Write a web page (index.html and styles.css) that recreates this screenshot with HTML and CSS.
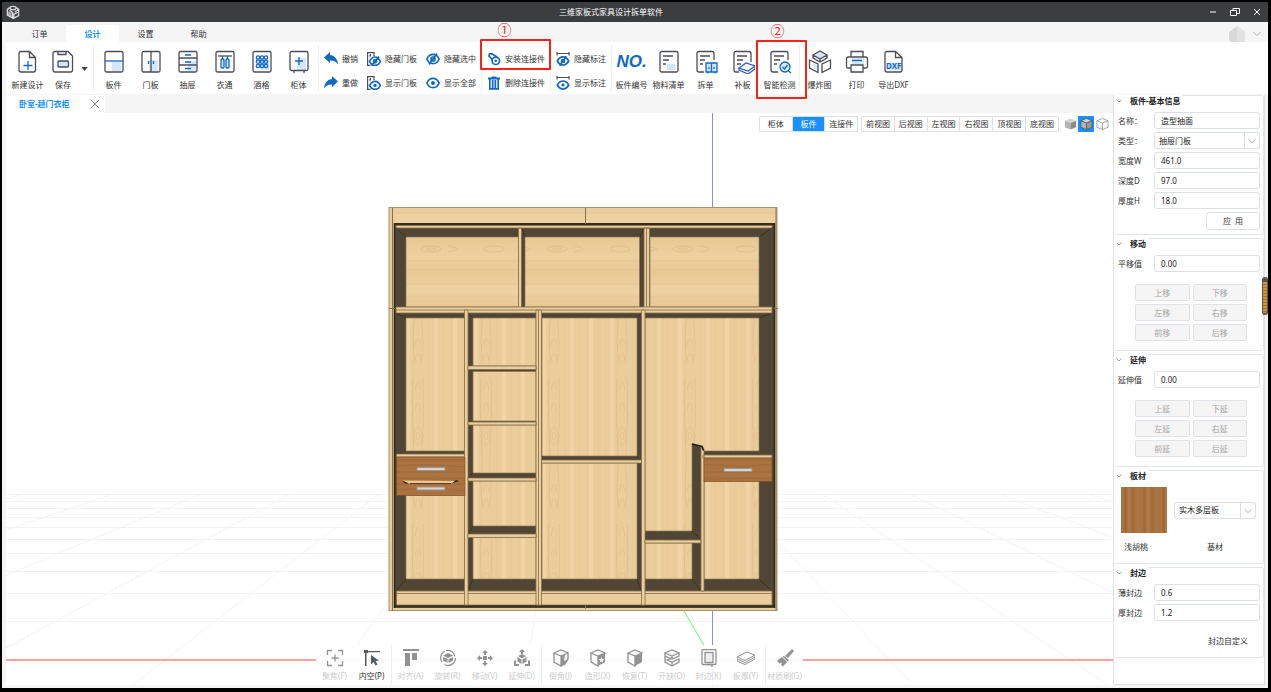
FILE: index.html
```html
<!DOCTYPE html>
<html lang="zh-CN">
<head>
<meta charset="utf-8">
<title>三维家板式家具设计拆单软件</title>
<link rel="stylesheet" href="styles.css">
</head>
<body>
<div class="app">
  <header class="titlebar">
    <svg class="logo" viewBox="0 0 16 16" width="14" height="16" fill="none" stroke="#d9d9d9" stroke-width="1.5"><ellipse cx="8" cy="3.4" rx="3.6" ry="1.9"/><path d="M4 3 1.6 5v6.500l6 3.500V8.500L4 6M12 3l2.500 2v3L9 10.500V15l5.500-3V9.500M3.500 7.500v4.500M5.600 8.500v4.500M10 8l4-2.500"/></svg>
    <h1 class="app-title">三维家板式家具设计拆单软件</h1>
    <div class="window-controls">
      <button aria-label="最小化"><svg viewBox="0 0 10 10" width="10" height="10"><path d="M2 5h6"/></svg></button>
      <button aria-label="还原"><svg viewBox="0 0 10 10" width="10" height="10"><path d="M.5 3.500h6v5h-6zM3 3.500v-2h6.500v5h-3"/></svg></button>
      <button aria-label="关闭"><svg viewBox="0 0 10 10" width="10" height="10"><path d="M2 2l6 6M8 2l-6 6"/></svg></button>
    </div>
  </header>

  <nav class="menu">
    <button class="menu-tab">订单</button>
    <button class="menu-tab active">设计</button>
    <button class="menu-tab">设置</button>
    <button class="menu-tab">帮助</button>
    <button class="account" aria-label="账户">
      <svg viewBox="0 0 16 16" width="16" height="16"><path d="M0 6 8 0l8 6v8l-2 2H2l-2-2z" fill="#d8d8d8"/><path d="M8 0l8 6v8l-2 2H8z" fill="#e2e2e2"/></svg>
      <svg viewBox="0 0 8 6" width="8" height="6" fill="none" stroke="#b5b5b5"><path d="M.5 1 4 4.500 7.500 1"/></svg>
    </button>
  </nav>

  <div class="ribbon">
    <div class="tool-group file-group">
      <button class="tool"><svg viewBox="0 0 24 24"><path class="o" d="M5 1.500h8.500l6 6V20q0 2-2 2H5q-2 0-2-2V3.500q0-2 2-2zM13.500 1.500v6h6"/><path class="b" d="M12 11v9M7.500 15.500h9"/></svg><span>新建设计</span></button>
      <button class="tool save"><svg viewBox="0 0 24 24"><path class="o" d="M4 1.500h13l4.500 4.500V20q0 2-2 2H4q-2 0-2-2V3.500q0-2 2-2z"/><path class="o" d="M7 1.500v3h8v-3"/><rect class="o f" x="7" y="11" width="10.500" height="6" rx="1"/></svg><span>保存</span></button>
      <button class="drop" aria-label="保存选项"><svg viewBox="0 0 8 5" width="7" height="4"><path d="M0 0h8L4 5z" fill="#444"/></svg></button>
    </div>
    <div class="tool-group">
      <button class="tool"><svg viewBox="0 0 24 24"><path class="f" d="M10 12h9v9h-9z"/><rect class="o" x="3" y="1.500" width="18" height="20.500" rx="1.500"/><path class="b" d="M3 11h18"/></svg><span>板件</span></button>
      <button class="tool"><svg viewBox="0 0 24 24"><path class="f" d="M10 10h9v11h-9z"/><rect class="o" x="3" y="1.500" width="18" height="20.500" rx="1.500"/><path class="o" d="M12 1.500V22"/><path class="b" d="M9.500 11v3M14.500 11v3"/></svg><span>门板</span></button>
      <button class="tool"><svg viewBox="0 0 24 24"><path class="f" d="M12 11h8v10h-8z"/><rect class="o" x="3" y="1.500" width="18" height="20.500" rx="1.500"/><path class="o" d="M3 8h18M3 15h18"/><path class="b" d="M9 5h6M9 12h6M9 18.500h6"/></svg><span>抽屉</span></button>
      <button class="tool"><svg viewBox="0 0 24 24"><rect class="o" x="3" y="1.500" width="18" height="20.500" rx="1.500"/><path class="o" d="M5 6h14"/><path class="b" d="M9.500 6v3M14.500 6v3"/><rect class="b f" x="8" y="9" width="3" height="9" rx="1"/><rect class="b f" x="13" y="9" width="3" height="9" rx="1"/></svg><span>衣通</span></button>
      <button class="tool"><svg viewBox="0 0 24 24"><path class="f" d="M10 10h9v10h-9z"/><rect class="o" x="3" y="1.500" width="18" height="20.500" rx="1.500"/><g class="b"><circle cx="8" cy="7.500" r="1.700"/><circle cx="12" cy="7.500" r="1.700"/><circle cx="16" cy="7.500" r="1.700"/><circle cx="8" cy="11.700" r="1.700"/><circle cx="12" cy="11.700" r="1.700"/><circle cx="16" cy="11.700" r="1.700"/><circle cx="8" cy="16" r="1.700"/><circle cx="12" cy="16" r="1.700"/><circle cx="16" cy="16" r="1.700"/></g></svg><span>酒格</span></button>
      <button class="tool"><svg viewBox="0 0 24 24"><path class="f" d="M10 8h9v12h-9z"/><rect class="o" x="3" y="1.500" width="18" height="19" rx="1.500"/><path class="o" d="M7 21v2M17 21v2"/><path class="b" d="M12 7v8M8 11h8"/></svg><span>柜体</span></button>
    </div>
    <div class="small-group">
      <button class="mini"><svg viewBox="0 0 14 14"><path class="s" d="M0 5.500 6 0v3q7 .5 8 9.500Q11 8 6 8.500V11z"/></svg>撤销</button>
      <button class="mini"><svg viewBox="0 0 14 14"><path class="s" d="M14 5.500 8 0v3q-7 .5-8 9.500Q3 8 8 8.500V11z"/></svg>重做</button>
      <button class="mini"><svg viewBox="0 0 14 14"><path class="k" d="M3.500 13.400H.600V.600H7V4M3.500 2v2M2 4h2"/><path class="e" d="M2.500 9.500Q4.500 5 8 5t5.300 4.500Q11.500 13.300 8 13.300T2.500 9.500zM4.500 13.500l7.500-9"/><circle class="e" cx="8" cy="9.300" r="1.500"/></svg>隐藏门板</button>
      <button class="mini"><svg viewBox="0 0 14 14"><path class="k" d="M3.500 13.400H.600V.600H7V4M3.500 2v2M2 4h2"/><path class="e" d="M2.500 9.500Q4.500 5.300 8 5.300t5.300 4.200Q11.500 13.300 8 13.300T2.500 9.500z"/><circle class="s" cx="8" cy="9.400" r="1.700"/></svg>显示门板</button>
      <button class="mini"><svg viewBox="0 0 14 14"><path class="e" d="M.8 7Q3 2.300 7 2.300T13.200 7Q11 11.700 7 11.700T.8 7zM3 12.500l8-11"/><circle class="e" cx="7" cy="7" r="2"/></svg>隐藏选中</button>
      <button class="mini"><svg viewBox="0 0 14 14"><path class="e" d="M.8 7Q3 2.300 7 2.300T13.200 7Q11 11.700 7 11.700T.8 7z"/><circle class="s" cx="7" cy="7" r="2"/></svg>显示全部</button>
    </div>
    <div class="small-group">
      <button class="mini"><svg viewBox="0 0 14 14"><path class="e" d="M5.500 8 2 4 2.500 1.800l2.500 0L10 5"/><circle class="e" cx="8.800" cy="8.800" r="3.700"/><circle class="s" cx="8.800" cy="8.800" r="1.300"/></svg>安装连接件</button>
      <button class="mini"><svg viewBox="0 0 14 14"><path class="s" d="M1 1.500h3.500V.5h5v1H13v2H1z"/><path class="e" d="M2.800 3v9.800h8.400V3M5.700 4v8M8.300 4v8"/></svg>删除连接件</button>
      <div class="callout callout-one"><span>①</span></div>
    </div>
    <div class="small-group">
      <button class="mini"><svg viewBox="0 0 14 14"><path class="k" d="M1 0v3.500M13 0v3.500M1 1.500h12"/><path class="e" d="M1.300 9Q3.500 4.800 7 4.800T12.700 9Q10.500 13 7 13T1.300 9zM3.500 13.500l7-9"/><circle class="e" cx="7" cy="9" r="1.500"/></svg>隐藏标注</button>
      <button class="mini"><svg viewBox="0 0 14 14"><path class="k" d="M1 0v3.500M13 0v3.500M1 1.500h12"/><path class="e" d="M1.300 9Q3.500 5 7 5T12.700 9Q10.500 13 7 13T1.300 9z"/><circle class="s" cx="7" cy="9" r="1.600"/></svg>显示标注</button>
    </div>
    <div class="tool-group">
      <button class="tool"><b class="number-icon">NO.</b><span>板件编号</span></button>
      <button class="tool"><svg viewBox="0 0 24 24"><path class="f" d="M10 14h8v6h-8z"/><rect class="o" x="3" y="1.500" width="18" height="20.500" rx="1.500"/><path class="o" d="M6 6h10M6 10h6M6 14h3"/></svg><span>物料清单</span></button>
      <button class="tool"><svg viewBox="0 0 24 24"><path class="o" d="M10 22H5q-2 0-2-2V3.500q0-2 2-2h13q2 0 2 2V10M6 6h10M6 10h5M6 14h3"/><path class="b f" d="M12 13h11v9H12z"/><path class="b" d="M17.500 13v9M15 17v2M20 17v2M14 22v1.500M21 22v1.500"/></svg><span>拆单</span></button>
      <button class="tool"><svg viewBox="0 0 24 24"><path class="o" d="M8 22H5q-2 0-2-2V3.500q0-2 2-2h13q2 0 2 2V12M6 6h10M6 10h6M6 14h4"/><path d="M8 18l7-5 9 3-7 5zM8 18v2l9 4 7-5v-3" fill="#fff" stroke="#2c56c5" stroke-width="1.200"/></svg><span>补板</span></button>
      <button class="tool"><svg viewBox="0 0 24 24"><path class="o" d="M10 22H5q-2 0-2-2V3.500q0-2 2-2h13q2 0 2 2V10M6 6h10M6 10h6M6 14h3"/><circle class="b f" cx="17" cy="17" r="5"/><path class="b" d="M14.500 17l2 2 3-4M20.500 21l2.500 2"/></svg><span>智能检测</span></button>
      <div class="callout callout-two"><span>②</span></div>
    </div>
    <div class="tool-group last">
      <button class="tool"><svg viewBox="0 0 24 24"><path class="f" d="M6 5l6-3 6 3-6 4zM5 13l5 3v5l-5-3z"/><path class="o" d="M5 5l7-4 7 4-7 4zM1.500 10 10 14v8.500L1.500 18zM22.500 10 14 14v8.500l8.500-4.500zM5 5v3l7 4 7-4V5M12 9v3"/></svg><span>爆炸图</span></button>
      <button class="tool"><svg viewBox="0 0 24 24"><path class="f" d="M7 8h12v6H7z"/><path class="o" d="M6 7V1.500h12V7M6 18H3q-1.500 0-1.500-1.500V9q0-2 2-2h17q2 0 2 2v7.500Q22.500 18 21 18h-3M6 15h12v7H6z"/><path class="b" d="M7 10.500h10"/></svg><span>打印</span></button>
      <button class="tool"><svg viewBox="0 0 24 24"><path class="f" d="M5 13h15v7H5z"/><path class="o" d="M5 1.500h8.500l6.500 6V20q0 2-2 2H5q-2 0-2-2V3.500q0-2 2-2zM13.500 1.500v6H20"/><text x="4" y="19" class="dxf">DXF</text></svg><span>导出DXF</span></button>
    </div>
  </div>

  <main class="workspace">
    <div class="document">
      <div class="doc-tabs">
        <div class="doc-tab"><span>卧室-趟门衣柜</span><button aria-label="关闭标签"><svg viewBox="0 0 8 8" width="8" height="8"><path d="M0 0l8 8M8 0 0 8" stroke="#8c8c8c" fill="none"/></svg></button></div>
      </div>
      <div class="stage">
        <svg class="scene" viewBox="6 113 1107 572" preserveAspectRatio="xMidYMid slice">
          <defs>
            <linearGradient id="fade" x1="0" y1="0" x2="0" y2="1"><stop offset="0" stop-color="#e6c794"/><stop offset=".25" stop-color="#eed09e"/><stop offset=".5" stop-color="#e8c995"/><stop offset=".75" stop-color="#eed2a2"/><stop offset="1" stop-color="#e6c794"/></linearGradient>
            <pattern id="wv" x="405" y="318" width="68" height="146" patternUnits="userSpaceOnUse">
              <path d="M0 0h68v146H0z" fill="#ebcd9c"/>
              <path d="M3 0v146M31 0v146M50 0v146" stroke="#f0d4a5" stroke-width="4"/>
              <path d="M8 0v146M24 0v146M38 0v146M46 0v146M58 0v146M65 0v146" stroke="#e2c18c" stroke-width="1" opacity=".6"/>
              <g fill="none" stroke="#d8b47c" stroke-width=".7" opacity=".6"><path d="M10 0q-4 20 0 45M16 0q4 24 0 45M8 60q-2 40 2 86M18 60q2 40-2 86"/><ellipse cx="13" cy="118" rx="4" ry="9"/><ellipse cx="13" cy="118" rx="2" ry="4"/><path d="M10 28q3-16 6 0M10 42q3-14 6 0M10 72q3-18 6 0M10 92q3-15 6 0"/></g>
            </pattern>
            <pattern id="wh" x="396" y="237" width="126" height="71" patternUnits="userSpaceOnUse">
              <path d="M0 0h126v71H0z" fill="url(#fade)"/>
              <path d="M0 24h126M0 33h126M0 47h126M0 60h126" stroke="#dfbd87" opacity=".5"/>
              <g fill="none" stroke="#d3ae74" stroke-width=".7" opacity=".6"><ellipse cx="35" cy="12" rx="10" ry="3"/><ellipse cx="35" cy="12" rx="5" ry="1"/><ellipse cx="98" cy="12" rx="10" ry="3"/><path d="M0 10q18 2 0 4M52 9q18 3 0 6M126 9q-14 3 0 6"/></g>
            </pattern>
            <pattern id="walnut" x="396" y="457" width="70" height="24" patternUnits="userSpaceOnUse"><path d="M0 0h70v24H0z" fill="#a97240"/><path d="M0 3h70M0 9q30-3 70 1M0 15h70M0 21q40 2 70 0" stroke="#975e30" fill="none" opacity=".5"/><path d="M0 6h70M0 18h70" stroke="#b67c48" opacity=".5"/></pattern>
          </defs>
          <g stroke="#f3f3f3" fill="none">
            <path d="M6 494.500h1107M6 501.500h1107M6 508.500h1107M6 517.500h1107M6 527.500h1107M6 539.500h1107M6 553.500h1107M6 571.500h1107M6 593.500h1107M6 621.500h1107" />
            <path d="M556 494 523 685M467 494 328 685M379 494 133 685M290 494-62 685M201 494-257 685M113 494-452 685M24 494-647 685M644 494 718 685M733 494 913 685M822 494 1108 685M910 494 1303 685M999 494 1499 685M1088 494 1694 685"/>
          </g>
          <path d="M6 660h1107" stroke="#ff8080" stroke-width="1.500"/>
          <path d="M712.500 113v572" stroke="#8a8aff"/>
          <path d="M684 611l43 74" stroke="#6cf56c"/>

          <rect x="389" y="207.500" width="388" height="403" fill="#ebcd9c" stroke="#a39373"/>
          <rect x="395" y="208" width="379" height="15" fill="url(#wh)"/>
          <rect x="395" y="223" width="379" height="385" fill="#514636"/>
          <path d="M395 224h379M395 606h379M394.500 223v385M774.500 223v385" stroke="#2d261b" stroke-width="1.500"/>
          <path d="M392.500 208v403M776 208v403M585.500 208v16M585.500 605v4M389 308.500h6M774 308.500h4" stroke="#88734f" fill="none"/>
          <g fill="url(#wh)" stroke="#8e7852" stroke-width=".7">
            <path d="M406 237h113v70H406zM525 237h114.500v70H525zM650 237h109v70H650z"/>
          </g>
          <g fill="url(#wv)" stroke="#8e7852" stroke-width=".7">
            <path d="M406 318h59v133h-59zM406 495h59v84h-59zM473 318h63v48h-63zM473 371.500h63V421h-63zM473 425h63v48h-63zM473 481h63v45h-63zM473 537h63v42h-63zM542 318h95v138h-95zM542 463h95v116h-95zM645 318h114v133h-55l-3-4-9-3v87h-47zM645 543h47v36h-47zM704 481h55v98h-55z"/>
          </g>
          <path d="M396 228l10 9M522 228l3 9M644 228l-4 9M772 228l-13 9M396 313l10 5M772 313l-13 5M396 591l10-12M468 591l5-12M468 313l5 5M641 313l-4 5M641 591l-4-12M701 591l-9-12M772 591l-13-12M701 540l-9-9M468 478l5-5M468 534l5-8" stroke="#302719" stroke-width=".7"/>
          <g fill="#ebce9e" stroke="#836d48" stroke-width=".8">
            <path d="M396 225.500h376v2.500H396zM518.500 228h3v80h-3zM644 228h5.500v80H644zM646.500 228v80"/>
            <path d="M396 307h376v6H396zM396 310h376"/>
            <path d="M396.500 591H772v14H396.500zM396.500 593.500H772"/>
            <path d="M464.500 310h3.500v295h-3.500zM536 310h5.500v295H536zM538.500 310v295M641.500 310h3.500v295h-3.500z"/>
            <path d="M468 366h68v3.500h-68zM468 422h68v3h-68zM468 478h68v3h-68zM468 534h68v3.500h-68zM541.500 460h100v3h-100zM396.500 454h68v3h-68zM645 540h56v3h-56zM703 455h69v3h-69zM701 447q2-1 3 2v142h-3z"/>
          </g>
          <path d="M692 444l10 2.500 1.500 4" fill="none" stroke="#1e1910" stroke-width="1.500"/>
          <path d="M396.500 457H465v38.500h-68.500zM704 458h68v23.500h-68z" fill="url(#walnut)" stroke="#7b4a23" stroke-width=".6"/>
          <path d="M402 480.500l56 .5-6 3-43-.5z" fill="#e8c997"/><path d="M402 480.500l7 3h-4zM456 480l3 1-8 3z" fill="#2f2415"/><path d="M410 483.500h41" stroke="#683b1b" />
          <g fill="#d4d4d4" stroke="#9f9389"><path d="M417 467.500h28v3h-28zM417 487h28v3h-28zM724 468.500h28v3h-28z"/></g>
        </svg>

        <div class="view-bar">
          <div class="segments three"><button>柜体</button><button class="active">板件</button><button>连接件</button></div>
          <div class="segments six"><button>前视图</button><button>后视图</button><button>左视图</button><button>右视图</button><button>顶视图</button><button>底视图</button></div>
          <div class="render-modes">
            <button aria-label="实体"><svg viewBox="0 0 14 14"><path d="M1 3.500 7 1l6 2.500L7 6z" fill="#d4d4d4"/><path d="M1 3.500 7 6v7l-6-2.500z" fill="#b4b4b4"/><path d="M13 3.500 7 6v7l6-2.500z" fill="#8a8a8a"/></svg></button>
            <button class="active" aria-label="实体线框"><svg viewBox="0 0 14 14" stroke="#555" stroke-width=".8"><path d="M1 3.500 7 1l6 2.500L7 6z" fill="#d4d4d4"/><path d="M1 3.500 7 6v7l-6-2.500z" fill="#b4b4b4"/><path d="M13 3.500 7 6v7l6-2.500z" fill="#999"/></svg></button>
            <button aria-label="线框"><svg viewBox="0 0 14 14" stroke="#888" stroke-width=".8" fill="none"><path d="M1 3.500 7 1l6 2.500L7 6zM1 3.500v7L7 13l6-2.500v-7M7 6v7"/></svg></button>
          </div>
        </div>

        <div class="action-bar">
          <div class="actions">
            <button><svg viewBox="0 0 18 18"><path class="l" d="M1.500 6V1.500H6M12 1.500h4.500V6M16.500 12v4.500H12M6 16.500H1.500V12M9 5.500v7M5.500 9h7"/></svg>聚焦(F)</button>
            <button class="enabled"><svg viewBox="0 0 18 18"><path d="M1 1h4v3H1zM2 4h1.500v13H2zM5 2h12v1.300H5zM8 6l8 5.500-3.500.5 2 3.500-2 1-2-3.500L8 15.500z" fill="#555962"/></svg>内空(P)</button>
          </div>
          <div class="actions">
            <button><svg viewBox="0 0 18 18"><path class="d" d="M1 0h16v2H1zM3 4h5v13H3zM10 4h5v7h-5z"/></svg>对齐(A)</button>
            <button><svg viewBox="0 0 18 18"><path class="l" d="M3 13a7.500 7.500 0 0 1 3-11M7 1.500a7.500 7.500 0 0 1 9 6M16.500 9a7.500 7.500 0 0 1-11 6.500"/><path class="d" d="M9 4l5 2.500-5 2.500-5-2.500zM4 8l4.500 2v4L4 11.500zM14 8l-4.500 2v4l4.500-2.500z"/></svg>旋转(R)</button>
            <button><svg viewBox="0 0 18 18"><path class="d" d="M9 1l3 3H6zM9 17l-3-3h6zM1 9l3-3v6zM17 9l-3 3V6zM7 7h4v4H7zM8 4h2v2H8zM8 12h2v2H8zM4 8h2v2H4zM12 8h2v2h-2z"/></svg>移动(V)</button>
            <button><svg viewBox="0 0 18 18"><path class="d" d="M9 0l3 3H6zM8 3h2v2H8zM9 5l4 2-4 2.500L5 7zM4.500 8 8.500 10.500V15l-4-2.500zM13.500 8l-4 2.500V15l4-2.500zM1 12l2-1v4h3v2H1zM17 12l-2-1v4h-3v2h5z"/></svg>延伸(D)</button>
          </div>
          <div class="actions">
            <button><svg viewBox="0 0 18 18"><path class="l" d="M2 4l7-3 7 3-7 3zM2 4v9l7 4V7M16 4v6l-3 5-4 2"/><path class="d" d="M9 7l4-2-1 7 4-2-3 5-4 2z"/></svg>倒角(J)</button>
            <button><svg viewBox="0 0 18 18"><path class="l" d="M2 4l7-3 7 3-7 3zM2 4v9l7 4V7"/><path class="d" d="M9 7l7-3v9l-7 4z"/><path fill="#fff" d="M12.500 8l.8 2h2l-1.500 1.500.5 2-1.800-1-1.800 1 .5-2L9.700 10h2z"/></svg>造形(X)</button>
            <button><svg viewBox="0 0 18 18"><path class="l" d="M2 4l7-3 7 3-7 3zM2 4v9l7 4V7"/><path class="d" d="M9 7l7-3v9l-7 4z"/></svg>恢复(T)</button>
            <button><svg viewBox="0 0 18 18"><path class="l" d="M2 4l7-3 7 3-7 3zM2 4v3l7 3 7-3V4M2 7v6l7 4 7-4v-3l-7 3-5-2 5-2M9 13v4M9 7v3"/></svg>开缺(O)</button>
            <button><svg viewBox="0 0 18 18"><rect class="l" x="2" y="0.500" width="14" height="15" rx="1"/><rect class="l pale" x="5" y="3.500" width="8" height="10"/><path class="l" d="M7 15.500h5v2.500"/></svg>封边(K)</button>
            <button><svg viewBox="0 0 18 18"><path class="l thin" d="M0 8l10-5 8 3-10 5.500zM0 8v2l8 3.500L18 8V6M0 10v2l8 3.500 10-5.500V8"/></svg>板厚(Y)</button>
          </div>
          <div class="actions">
            <button><svg viewBox="0 0 18 18"><path class="d" d="M16 0l2 2-6 7-3-2zM8 7l5 4-1.500 1.500-5-5zM6 8l5 5-4 4.500-2-2 1-2-2.500 1L1 12z"/></svg>材质刷(G)</button>
          </div>
        </div>
      </div>
    </div>

    <aside class="properties">
      <section class="group">
        <h2><button><svg viewBox="0 0 6 4"><path d="M.5.5 3 3 5.500.500"/></svg>板件-基本信息</button></h2>
        <div class="fields">
          <label for="name">名称：</label><input id="name" value="造型抽面">
          <label for="kind">类型：</label><span class="select"><select id="kind"><option>抽屉门板</option></select><svg viewBox="0 0 16 17"><path d="M4 7l4 4 4-4"/></svg></span>
          <label for="w">宽度W</label><input id="w" value="461.0">
          <label for="d">深度D</label><input id="d" value="97.0">
          <label for="h">厚度H</label><input id="h" value="18.0">
          <button class="apply">应&nbsp; 用</button>
        </div>
      </section>
      <section class="group">
        <h2><button><svg viewBox="0 0 6 4"><path d="M.5.5 3 3 5.500.500"/></svg>移动</button></h2>
        <div class="fields"><label for="move">平移值</label><input id="move" value="0.00"></div>
        <div class="nudges"><button disabled>上移</button><button disabled>下移</button><button disabled>左移</button><button disabled>右移</button><button disabled>前移</button><button disabled>后移</button></div>
      </section>
      <section class="group">
        <h2><button><svg viewBox="0 0 6 4"><path d="M.5.5 3 3 5.500.500"/></svg>延伸</button></h2>
        <div class="fields"><label for="extend">延伸值</label><input id="extend" value="0.00"></div>
        <div class="nudges"><button disabled>上延</button><button disabled>下延</button><button disabled>左延</button><button disabled>右延</button><button disabled>前延</button><button disabled>后延</button></div>
      </section>
      <section class="group">
        <h2><button><svg viewBox="0 0 6 4"><path d="M.5.5 3 3 5.500.500"/></svg>板材</button></h2>
        <div class="material">
          <div class="swatch"></div>
          <span class="select"><select aria-label="基材"><option>实木多层板</option></select><svg viewBox="0 0 16 17"><path d="M4 7l4 4 4-4"/></svg></span>
          <span class="caption">浅胡桃</span><span class="caption">基材</span>
        </div>
      </section>
      <section class="group">
        <h2><button><svg viewBox="0 0 6 4"><path d="M.5.5 3 3 5.500.500"/></svg>封边</button></h2>
        <div class="fields">
          <label for="thin">薄封边</label><input id="thin" value="0.6">
          <label for="thick">厚封边</label><input id="thick" value="1.2">
        </div>
        <button class="custom-edge">封边自定义</button>
      </section>
      <div class="scroll-grip"></div>
    </aside>
  </main>
</div>
</body>
</html>
```
FILE: styles.css
```css
* { box-sizing: border-box; }
body {
  margin: 0;
  font: 8px/12px "Noto Sans", "Noto Sans CJK SC", sans-serif;
  color: #333;
  background: #000;
}
button, input, select { font: inherit; color: inherit; }
button { border: 0; padding: 0; background: none; white-space: nowrap; }
svg { flex: none; display: block; }

.app {
  height: 100vh;
  display: flex;
  flex-direction: column;
  border: solid #000;
  border-width: 2px 3px 4px 2px;
  background: #f5f5f5;
}

.titlebar {
  display: flex;
  align-items: center;
  flex: none;
  height: 20px;
  padding-left: 4px;
  background: #3c3d3f;
  color: #fff;
}
.app-title { flex: 1; margin: 0; font: inherit; text-align: center; }
.window-controls { display: flex; }
.window-controls button { width: 22px; height: 20px; display: grid; place-items: center; }
.window-controls path { fill: none; stroke: #fff; }

.menu { display: flex; flex: none; height: 20px; padding: 3px 0 0 11px; }
.menu-tab { width: 53px; border-radius: 3px 3px 0 0; }
.menu-tab.active { background: #fff; color: #1890ff; font-weight: 700; }
.account { display: flex; align-items: center; gap: 8px; margin-left: auto; padding-right: 7px; }

.ribbon { display: flex; flex: none; height: 52px; margin-left: 4px; padding: 3px 0 2px; background: #fff; }
.tool-group, .small-group { position: relative; display: flex; border-right: 1px solid #efefef; padding: 0 1px; }
.file-group { padding: 0 4px 0 3px; }
.last { border: 0; }
.tool { width: 37px; display: flex; flex-direction: column; align-items: center; gap: 5px; padding-top: 5px; }
.tool svg { width: 24px; height: 24px; }
.tool.save { width: 34px; }
.drop { width: 9px; display: grid; place-items: center; }
.o, .b, .k, .e, .l { fill: none; }
.o { stroke: #4a4e5a; stroke-width: 1.3; }
.b { stroke: #1069c4; stroke-width: 1.3; }
.f { fill: #d3e6fc; }
.s { fill: #1069c4; }
.e { stroke: #1069c4; stroke-width: 1.7; }
.k { stroke: #4a4e5a; stroke-width: 1.2; }
.dxf { font: 700 8px "Noto Sans", sans-serif; fill: #1069c4; }
.number-icon { height: 24px; font: italic 700 17px/24px "Liberation Sans", sans-serif; color: #1069c4; }

.small-group { display: grid; grid-auto-flow: column; grid-template-rows: 24px 24px; column-gap: 9px; padding: 2px 5px 0; }
.mini { display: flex; align-items: center; gap: 4px; }
.mini svg { width: 14px; height: 14px; }

.callout { position: absolute; z-index: 3; border: 2px solid #f52318; border-radius: 1px; pointer-events: none; }
.callout span { position: absolute; left: 0; right: 0; top: -20px; text-align: center; font-size: 14px; line-height: 18px; color: #f52318; }
.callout-one { inset: -6px -1px 22px -2px; }
.callout-one span { right: 22px; }
.callout-two { top: -5px; bottom: -7px; right: -8px; width: 51px; }
.callout-two span { right: 8px; }

.workspace { flex: 1; min-height: 0; display: grid; grid-template-columns: minmax(0, 1fr) 152px; padding: 0 3px 3px 4px; }
.document { display: flex; flex-direction: column; }
.doc-tabs { flex: none; height: 19px; padding-top: 1px; }
.doc-tab { display: flex; align-items: center; justify-content: space-between; width: 99px; height: 18px; padding: 0 6px 0 13px; background: #fff; color: #1890ff; font-weight: 700; }
.stage { position: relative; flex: 1; overflow: hidden; background: #fff; }
.scene { position: absolute; inset: 0; width: 100%; height: 100%; }

.view-bar { position: absolute; top: 3px; right: 3px; display: flex; gap: 3px; }
.segments { display: flex; border: 1px solid #dcdfe6; background: #fff; border-radius: 1px; }
.three { width: 99px; }
.six { width: 198px; }
.segments button { flex: 1; height: 14px; }
.segments button + button { border-left: 1px solid #dcdfe6; }
.segments .active, .render-modes .active { background: #1890ff; color: #fff; }
.render-modes { display: flex; }
.render-modes button { width: 16px; height: 16px; display: grid; place-items: center; }
.render-modes svg { width: 13px; height: 14px; }

.action-bar { position: absolute; left: 0; right: 0; bottom: 0; width: max-content; height: 40px; margin: 0 auto; display: flex; gap: 1px; background: rgba(255, 255, 255, .95); }
.actions { display: flex; }
.actions + .actions { border-left: 1px solid #efefef; }
.actions button { width: 37px; display: flex; flex-direction: column; align-items: center; gap: 3px; padding-top: 4px; color: #ccc; }
.actions .enabled { color: #333; }
.actions svg { width: 18px; height: 18px; }
.l { stroke: #929292; stroke-width: 1.3; }
.thin { stroke-width: 1; }
.pale { fill: #eee; }
.d { fill: #929292; }

.properties { position: relative; display: flex; flex-direction: column; gap: 3px; margin-top: 1px; border: 1px solid #dfe2e8; border-top: 0; background: #fff; }
.group { border: 1px solid #e2e5ea; border-left: 0; border-radius: 3px; padding: 0 3px 4px 4px; }
.group h2 { width: max-content; margin: -1px 0 5px -4px; padding-right: 2px; background: #fff; font: inherit; font-weight: 700; color: #222; }
.group h2 button { display: flex; align-items: center; gap: 8px; height: 12px; padding-left: 2px; }
.group h2 svg { width: 6px; height: 4px; }
.group h2 path, .select path { fill: none; stroke: #9b9fa6; }
.fields { display: grid; grid-template-columns: 33px 1fr; gap: 3px; align-items: center; }
.fields label { white-space: nowrap; }
.fields input, .select select { width: 100%; height: 17px; border: 1px solid #dcdfe6; border-radius: 3px; background: #fff; padding: 0 6px; color: #222; }
.select { position: relative; display: block; }
.select select { appearance: none; display: block; padding: 0 16px 0 4px; }
.select svg { position: absolute; top: 0; right: 0; width: 16px; height: 17px; border: 1px solid #dcdfe6; border-radius: 0 3px 3px 0; pointer-events: none; }
.apply { grid-column: 2; justify-self: end; width: 54px; height: 18px; border: 1px solid #dcdfe6; border-radius: 3px; }
.nudges { display: grid; grid-template-columns: 1fr 1fr; gap: 3px; margin: 12px 13px 5px 17px; }
.nudges button { height: 17px; border: 1px solid #e0e2e6; border-radius: 2px; background: #f5f5f5; color: #a4a4a4; }
.material { display: grid; grid-template-columns: 46px 82px; column-gap: 7px; row-gap: 8px; align-items: center; padding: 0 0 6px 3px; }
.swatch { height: 46px; background: repeating-linear-gradient(90deg, #a87241 0 3px, #9d6737 4px 5px, #b07a48 7px 9px, #a36c3c 11px 13px, #ab7543 15px 19px); }
.caption { padding-left: 3px; }
.caption:last-child { padding-left: 33px; }
.custom-edge { display: block; margin: 14px 12px 6px auto; }
.scroll-grip { position: absolute; top: 182px; right: -4px; width: 6px; height: 38px; border: solid #555; border-width: 5px 1px 2px; border-radius: 3px; background: repeating-linear-gradient(#d9902f 0 2px, #a8712a 2px 3px); }
```
